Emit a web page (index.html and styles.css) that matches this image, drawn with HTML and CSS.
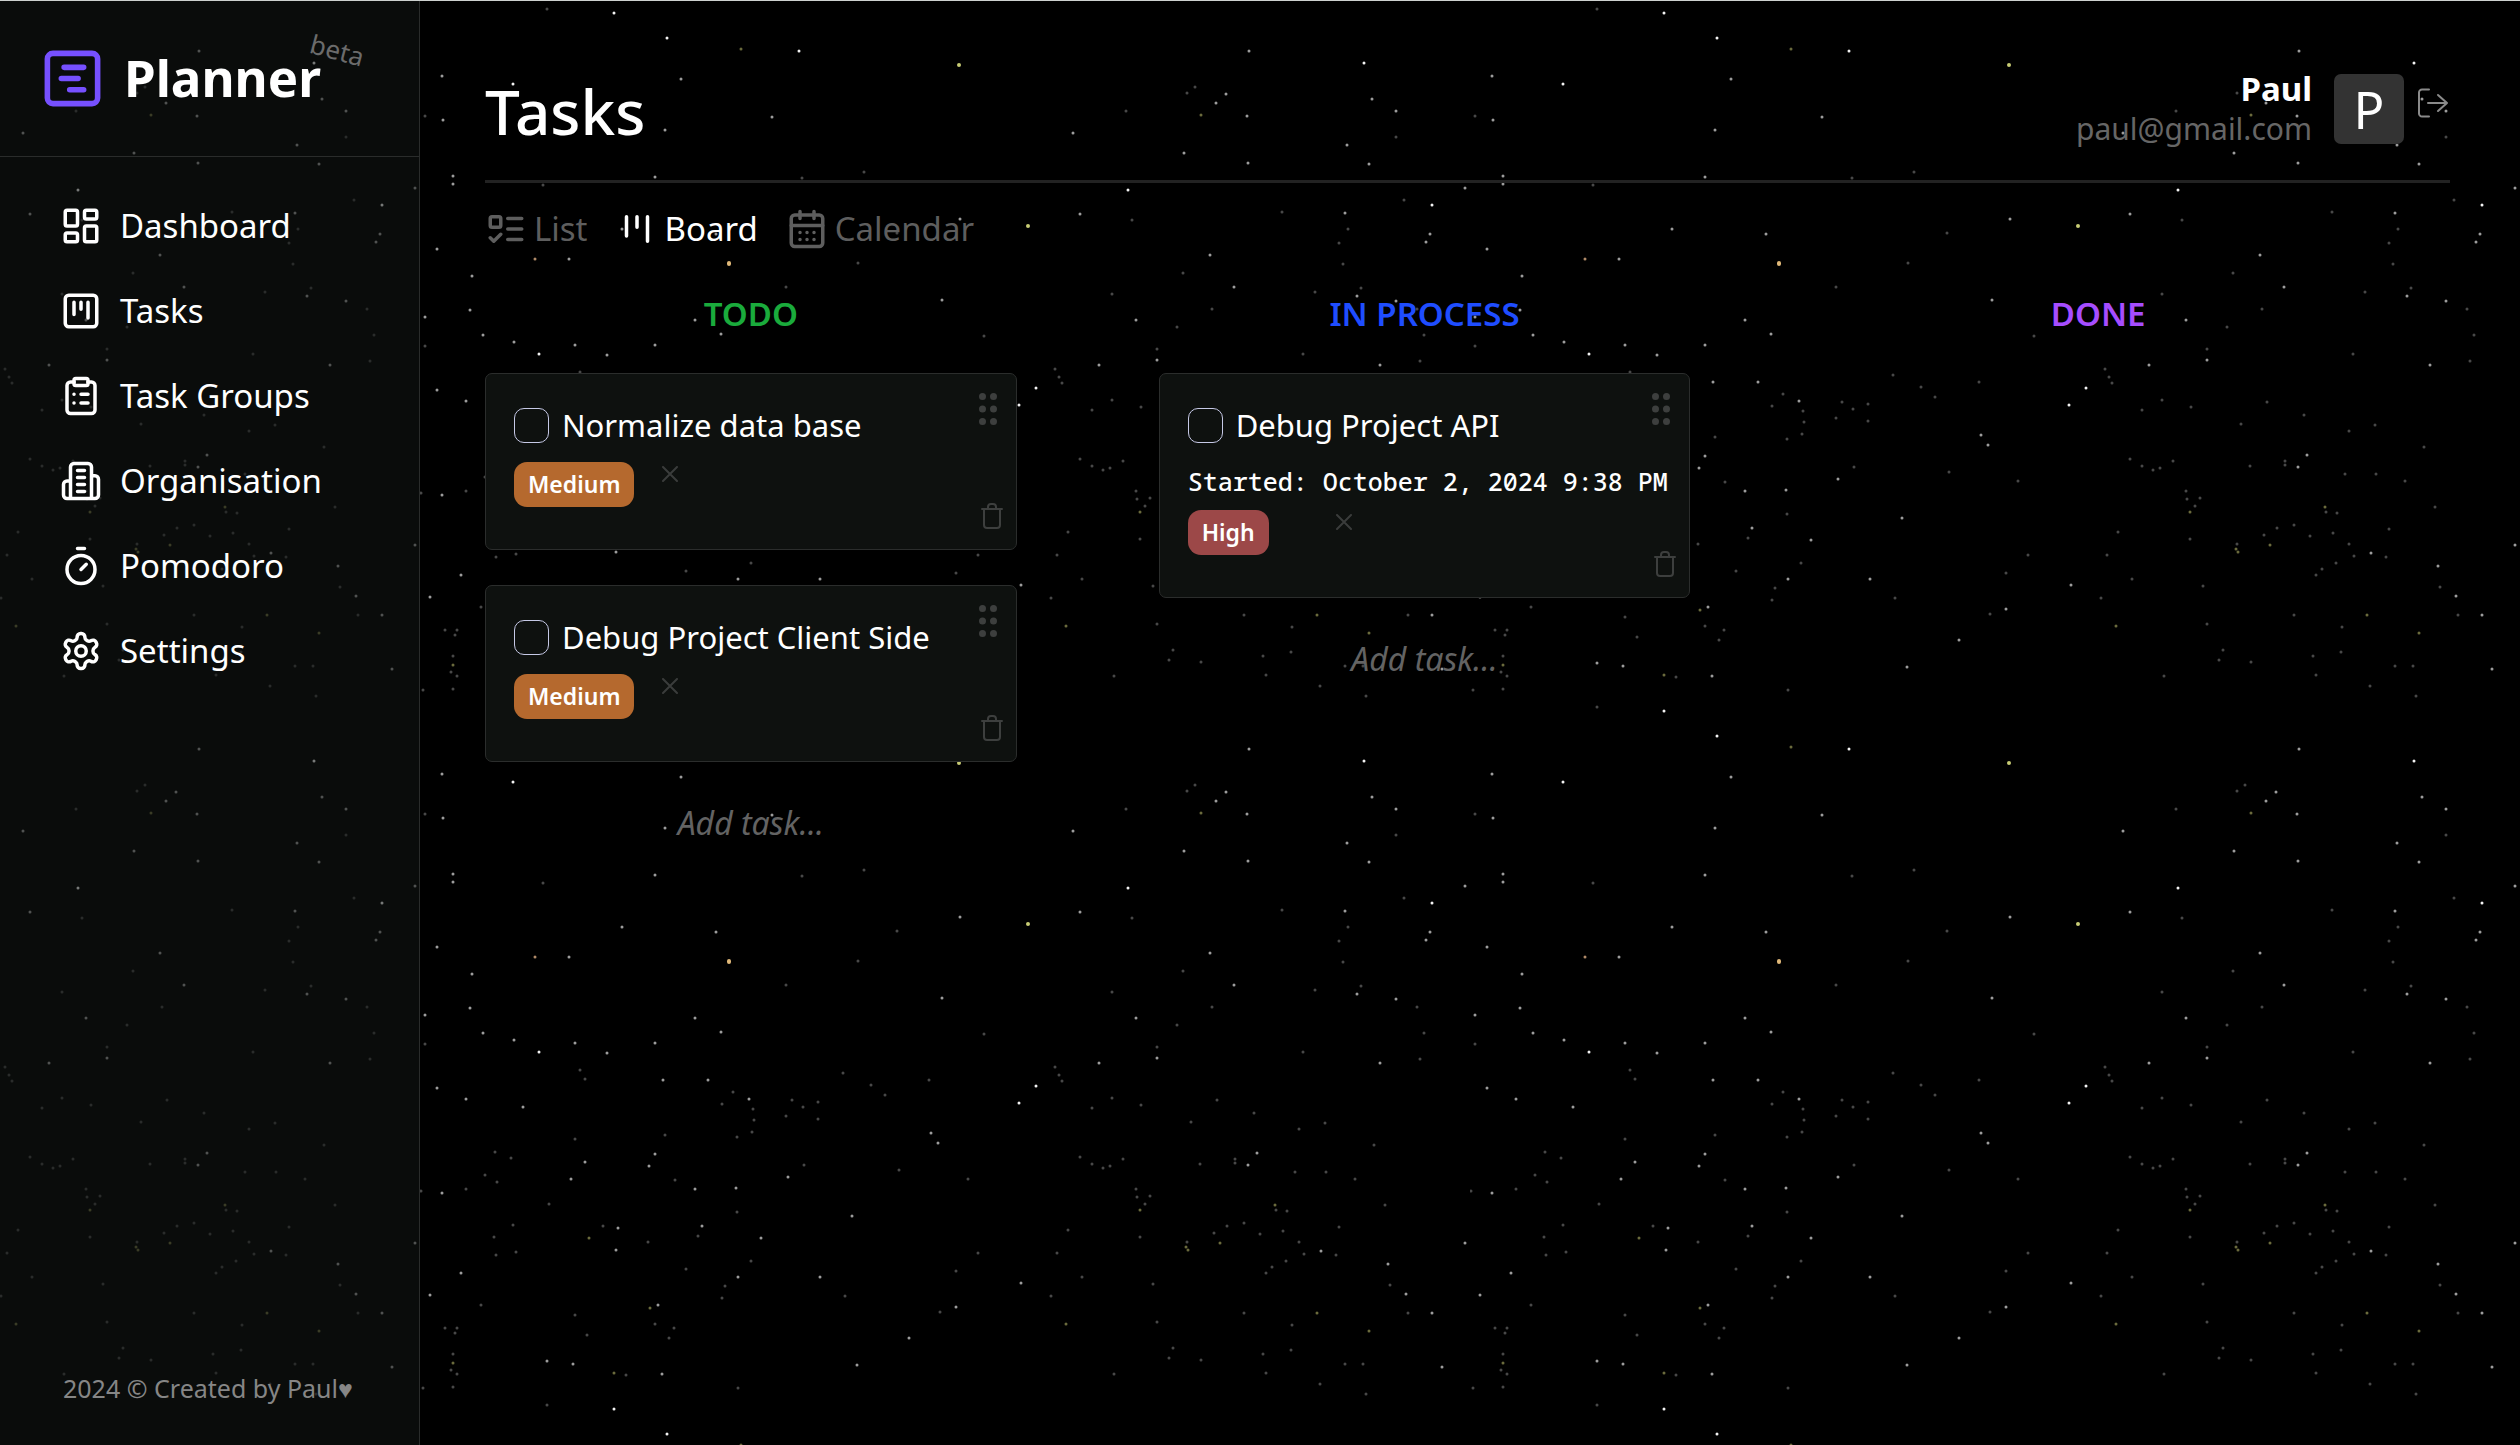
FILE: index.html
```html
<!DOCTYPE html>
<html lang="en">
<head>
<meta charset="utf-8">
<meta name="viewport" content="width=device-width, initial-scale=1">
<title>Tasks - Planner</title>
<link rel="stylesheet" href="styles.css">
</head>
<body>
<svg class="sky" aria-hidden="true">
  <defs>
    <pattern id="stars" x="420" y="0" width="1050" height="698" patternUnits="userSpaceOnUse">
      <path class="star star-bright" d="M194 13h0M247 38h0M379 51h0M93 84h0M944 63h0M708 190h0M1012 205h0M119 354h0M616 388h0M599 405h0"/>
      <path class="star star-mid" d="M22 76h0M261 79h0M829 51h0M23 120h0M245 130h0M352 117h0M806 94h0M796 103h0M827 116h0M952 99h0M976 111h0M653 133h0M764 153h0M828 163h0M927 145h0M949 164h0M33 176h0M33 184h0M235 177h0M1045 188h0M925 213h0M660 214h0M540 219h0M1010 234h0M1006 242h0M202 229h0M296 234h0M17 249h0M149 259h0M790 255h0M52 276h0M814 287h0M937 296h0M976 301h0M522 300h0M50 310h0M5 317h0M275 320h0M716 320h0M63 335h0M301 334h0M94 342h0M155 345h0M235 345h0M187 355h0M737 360h0M960 365h0M243 382h0M288 382h0M679 365h0M17 390h0M46 401h0M329 401h0M103 409h0M511 435h0M518 445h0M235 456h0M165 464h0M229 468h0M837 455h0M828 467h0M151 481h0M368 479h0M22 495h0M275 491h0M316 490h0M432 518h0M198 530h0M282 528h0M341 540h0M1045 545h0M196 552h0M901 553h0M968 566h0M41 575h0M318 579h0M400 579h0M601 585h0M10 597h0M986 596h0M238 607h0M536 609h0M1012 615h0M489 640h0M127 663h0M153 666h0M437 667h0M242 676h0M1022 669h0"/>
      <path class="star star-dim" d="M127 9h0M5 116h0M775 87h0M767 93h0M706 111h0M976 137h0M123 185h0M382 178h0M444 172h0M984 200h0M862 212h0M712 220h0M928 229h0M919 243h0M477 233h0M438 263h0M923 264h0M763 273h0M366 287h0M692 294h0M895 292h0M941 288h0M997 309h0M792 309h0M757 327h0M564 336h0M1004 335h0M5 346h0M737 349h0M883 354h0M1000 361h0M160 372h0M165 381h0M423 375h0M635 369h0M639 377h0M642 383h0M509 382h0M451 387h0M313 394h0M465 397h0M302 406h0M333 411h0M372 402h0M398 404h0M383 409h0M692 400h0M721 407h0M672 410h0M797 402h0M834 415h0M366 418h0M398 421h0M334 422h0M771 424h0M905 425h0M879 431h0M332 434h0M317 439h0M245 437h0M155 441h0M954 447h0M75 454h0M91 460h0M660 459h0M703 461h0M672 466h0M683 470h0M690 468h0M815 461h0M815 465h0M780 466h0M384 467h0M479 472h0M875 474h0M906 474h0M65 477h0M77 484h0M255 482h0M548 481h0M935 481h0M1 493h0M46 491h0M716 491h0M717 499h0M730 498h0M725 506h0M129 506h0M856 512h0M867 513h0M965 507h0M317 514h0M93 527h0M74 539h0M183 528h0M278 538h0M228 544h0M720 539h0M767 544h0M807 528h0M824 525h0M794 535h0M840 536h0M863 533h0M879 544h0M919 529h0M648 532h0M96 554h0M76 557h0M558 555h0M637 555h0M884 556h0M916 557h0M331 563h0M866 563h0M852 569h0M846 575h0M266 571h0M536 573h0M662 579h0M305 588h0M302 600h0M733 586h0M970 587h0M425 598h0M631 598h0M61 607h0M520 614h0M155 617h0M824 615h0M988 615h0M235 626h0M737 624h0M872 627h0M25 630h0M37 630h0M35 635h0M254 630h0M167 637h0M249 640h0M753 650h0M749 660h0M871 652h0M843 656h0M33 656h0M31 672h0M37 676h0M925 666h0M943 666h0M781 662h0M206 677h0M694 676h0M846 675h0M3 690h0M33 689h0M318 690h0M946 696h0M900 686h0"/>
      <path class="star star-moss" d="M321 49h0M781 115h0M720 512h0M855 507h0M169 540h0M766 549h0M768 552h0M800 545h0M230 610h0M646 626h0M897 615h0M949 633h0M33 665h0M194 675h0"/>
      <path class="star star-yellow" d="M539 65h0M608 226h0"/>
      <path class="star star-gold" d="M309 263v1"/>
      <path class="star star-copper" d="M115 259h0"/>
    </pattern>
  </defs>
  <rect width="100%" height="100%" fill="url(#stars)"/>
</svg>

<div class="app">
  <aside class="sidebar">
    <header class="brand">
      <svg class="brand-logo icon" viewBox="0 0 24 24" aria-hidden="true"><rect x="3" y="3" width="18" height="18" rx="2"/><path d="M9 8h7M8 12h6M11 16h5"/></svg>
      <span class="brand-name">Planner<small class="brand-tag">beta</small></span>
    </header>
    <nav class="menu">
      <a class="menu-link" href="#dashboard"><svg class="icon" viewBox="0 0 24 24"><rect x="3" y="3" width="7" height="9" rx="1"/><rect x="14" y="3" width="7" height="5" rx="1"/><rect x="14" y="12" width="7" height="9" rx="1"/><rect x="3" y="16" width="7" height="5" rx="1"/></svg>Dashboard</a>
      <a class="menu-link" href="#tasks"><svg class="icon" viewBox="0 0 24 24"><rect x="3" y="3" width="18" height="18" rx="2"/><path d="M8 7v7M12 7v4M16 7v9"/></svg>Tasks</a>
      <a class="menu-link" href="#groups"><svg class="icon" viewBox="0 0 24 24"><rect x="8" y="2" width="8" height="4" rx="1"/><path d="M16 4h2a2 2 0 0 1 2 2v14a2 2 0 0 1-2 2H6a2 2 0 0 1-2-2V6a2 2 0 0 1 2-2h2M12 11h4M12 16h4M8 11h.01M8 16h.01"/></svg>Task Groups</a>
      <a class="menu-link" href="#organisation"><svg class="icon" viewBox="0 0 24 24"><path d="M6 22V4a2 2 0 0 1 2-2h8a2 2 0 0 1 2 2v18ZM6 12H4a2 2 0 0 0-2 2v6a2 2 0 0 0 2 2h2M18 9h2a2 2 0 0 1 2 2v9a2 2 0 0 1-2 2h-2M10 6h4M10 10h4M10 14h4M10 18h4"/></svg>Organisation</a>
      <a class="menu-link" href="#pomodoro"><svg class="icon" viewBox="0 0 24 24"><path d="M10 2h4M12 14l3-3"/><circle cx="12" cy="14" r="8"/></svg>Pomodoro</a>
      <a class="menu-link" href="#settings"><svg class="icon" viewBox="0 0 24 24"><path d="M12.22 2h-.44a2 2 0 0 0-2 2v.18a2 2 0 0 1-1 1.73l-.43.25a2 2 0 0 1-2 0l-.15-.08a2 2 0 0 0-2.73.73l-.22.38a2 2 0 0 0 .73 2.73l.15.1a2 2 0 0 1 1 1.72v.51a2 2 0 0 1-1 1.74l-.15.09a2 2 0 0 0-.73 2.73l.22.38a2 2 0 0 0 2.73.73l.15-.08a2 2 0 0 1 2 0l.43.25a2 2 0 0 1 1 1.73V20a2 2 0 0 0 2 2h.44a2 2 0 0 0 2-2v-.18a2 2 0 0 1 1-1.73l.43-.25a2 2 0 0 1 2 0l.15.08a2 2 0 0 0 2.73-.73l.22-.39a2 2 0 0 0-.73-2.73l-.15-.08a2 2 0 0 1-1-1.74v-.5a2 2 0 0 1 1-1.74l.15-.09a2 2 0 0 0 .73-2.73l-.22-.38a2 2 0 0 0-2.73-.73l-.15.08a2 2 0 0 1-2 0l-.43-.25a2 2 0 0 1-1-1.73V4a2 2 0 0 0-2-2z"/><circle cx="12" cy="12" r="3"/></svg>Settings</a>
    </nav>
    <footer class="credits">2024 © Created by Paul♥</footer>
  </aside>

  <main class="content">
    <header class="page-head">
      <h1 class="page-title">Tasks</h1>
      <div class="account">
        <div class="account-text">
          <strong class="account-name">Paul</strong>
          <span class="account-mail">paul@gmail.com</span>
        </div>
        <div class="avatar">P</div>
        <button class="logout" type="button" aria-label="Log out"><svg viewBox="0 0 32 32"><path d="M11 2.500H4a3 3 0 0 0-3 3v21a3 3 0 0 0 3 3h7M10 16h19M20 8l9 8-9 8"/></svg></button>
      </div>
    </header>

    <nav class="tabs">
      <button class="tab" type="button"><svg class="icon" viewBox="0 0 24 24"><rect x="3" y="5" width="6" height="6" rx="1"/><path d="m3 17 2 2 4-4M13 6h8M13 12h8M13 18h8"/></svg>List</button>
      <button class="tab tab-active" type="button"><svg class="icon" viewBox="0 0 24 24"><path d="M6 5v11M12 5v6M18 5v14"/></svg>Board</button>
      <button class="tab" type="button"><svg class="icon" viewBox="0 0 24 24"><path d="M8 2v4M16 2v4M3 10h18M8 14h.01M12 14h.01M16 14h.01M8 18h.01M12 18h.01M16 18h.01"/><rect x="3" y="4" width="18" height="18" rx="2"/></svg>Calendar</button>
    </nav>

    <div class="board">
      <section class="column">
        <h2 class="column-title todo">TODO</h2>
        <article class="card">
          <label class="task"><input class="check" type="checkbox"><span>Normalize data base</span></label>
          <div class="meta"><span class="badge medium">Medium</span><button class="clear" type="button" aria-label="Clear priority"><svg viewBox="0 0 16 16"><path d="M1 1l14 14M15 1L1 15"/></svg></button></div>
          <button class="grip" type="button" aria-label="Move task"><svg viewBox="0 0 18 32"><path d="M3.500 3.500h0M14.500 3.500h0M3.500 16h0M14.500 16h0M3.500 28.500h0M14.500 28.500h0"/></svg></button>
          <button class="trash" type="button" aria-label="Delete task"><svg viewBox="0 0 22 26"><path d="M1 6h20M3 6v16a3 3 0 0 0 3 3h10a3 3 0 0 0 3-3V6M7 6V4a3 3 0 0 1 3-3h2a3 3 0 0 1 3 3v2"/></svg></button>
        </article>
        <article class="card">
          <label class="task"><input class="check" type="checkbox"><span>Debug Project Client Side</span></label>
          <div class="meta"><span class="badge medium">Medium</span><button class="clear" type="button" aria-label="Clear priority"><svg viewBox="0 0 16 16"><path d="M1 1l14 14M15 1L1 15"/></svg></button></div>
          <button class="grip" type="button" aria-label="Move task"><svg viewBox="0 0 18 32"><path d="M3.500 3.500h0M14.500 3.500h0M3.500 16h0M14.500 16h0M3.500 28.500h0M14.500 28.500h0"/></svg></button>
          <button class="trash" type="button" aria-label="Delete task"><svg viewBox="0 0 22 26"><path d="M1 6h20M3 6v16a3 3 0 0 0 3 3h10a3 3 0 0 0 3-3V6M7 6V4a3 3 0 0 1 3-3h2a3 3 0 0 1 3 3v2"/></svg></button>
        </article>
        <button class="add" type="button">Add task...</button>
      </section>

      <section class="column">
        <h2 class="column-title process">IN PROCESS</h2>
        <article class="card">
          <label class="task"><input class="check" type="checkbox"><span>Debug Project API</span></label>
          <p class="started">Started: October 2, 2024 9:38 PM</p>
          <div class="meta"><span class="badge high">High</span><button class="clear" type="button" aria-label="Clear priority"><svg viewBox="0 0 16 16"><path d="M1 1l14 14M15 1L1 15"/></svg></button></div>
          <button class="grip" type="button" aria-label="Move task"><svg viewBox="0 0 18 32"><path d="M3.500 3.500h0M14.500 3.500h0M3.500 16h0M14.500 16h0M3.500 28.500h0M14.500 28.500h0"/></svg></button>
          <button class="trash" type="button" aria-label="Delete task"><svg viewBox="0 0 22 26"><path d="M1 6h20M3 6v16a3 3 0 0 0 3 3h10a3 3 0 0 0 3-3V6M7 6V4a3 3 0 0 1 3-3h2a3 3 0 0 1 3 3v2"/></svg></button>
        </article>
        <button class="add" type="button">Add task...</button>
      </section>

      <section class="column">
        <h2 class="column-title done">DONE</h2>
      </section>
    </div>
  </main>
</div>
</body>
</html>
```
FILE: styles.css
```css
* {
  box-sizing: border-box;
}

body {
  margin: 0;
  background: #000;
  color: #fff;
  font-family: "Noto Sans", "Open Sans", sans-serif;
  font-size: 33px;
  line-height: 48px;
}

button {
  padding: 0;
  border: 0;
  background: none;
  color: inherit;
  font: inherit;
  cursor: pointer;
}

svg {
  display: block;
  fill: none;
  stroke: currentColor;
  stroke-width: 2;
  stroke-linecap: round;
  stroke-linejoin: round;
}

/* Starry background */
.sky {
  position: absolute;
  inset: 0;
  width: 100%;
  height: 100%;
  stroke: none;
  z-index: -1;
}

.star {
  stroke-width: 3;
}

.star-bright {
  stroke: #f2f2f2;
}

.star-mid {
  stroke: #9c9c9c;
}

.star-dim {
  stroke: #484848;
}

.star-moss {
  stroke: #6a6a3c;
}

.star-yellow {
  stroke: #c8cc74;
  stroke-width: 4;
}

.star-gold {
  stroke: #e0b878;
  stroke-width: 4;
}

.star-copper {
  stroke: #b08a68;
}

.app {
  display: grid;
  grid-template-columns: 420px minmax(0, 1fr);
  min-height: 100vh;
  border-top: 1px solid #cdd1cf;
}

.icon {
  width: 42px;
  height: 42px;
  flex: none;
}

/* Sidebar */
.sidebar {
  display: flex;
  flex-direction: column;
  background: rgba(18, 22, 20, 0.55);
  border-right: 1px solid #2a2c2b;
}

.brand {
  display: flex;
  align-items: center;
  gap: 18px;
  height: 156px;
  padding-left: 39px;
  border-bottom: 1px solid #2a2c2b;
}

.brand-logo {
  width: 67px;
  height: 67px;
  color: #7650ff;
}

.brand-name {
  position: relative;
  padding-bottom: 3px;
  font-size: 51px;
  font-weight: 700;
  line-height: 70px;
}

.brand-tag {
  position: absolute;
  top: -10px;
  right: -44px;
  color: #6b6b6b;
  font-size: 26px;
  font-weight: 400;
  line-height: 36px;
  transform: rotate(15deg);
}

.menu {
  display: flex;
  flex-direction: column;
  gap: 37px;
  padding: 45px 60px;
}

.menu-link {
  display: flex;
  align-items: center;
  gap: 18px;
  color: #fff;
  text-decoration: none;
}

.credits {
  margin-top: auto;
  padding: 0 20px 39px 63px;
  color: #868686;
  font-size: 25px;
  line-height: 36px;
}

/* Page header */
.content {
  padding: 0 70px 40px 65px;
}

.page-head {
  display: flex;
  align-items: center;
  justify-content: space-between;
  height: 182px;
  padding-top: 36px;
  border-bottom: 3px solid #222;
}

.page-title {
  margin: 0;
  padding-top: 4px;
  font-size: 62px;
  font-weight: 500;
  line-height: 84px;
}

.account {
  display: flex;
  align-items: center;
}

.account-text {
  display: flex;
  flex-direction: column;
  margin-right: 22px;
  line-height: 40px;
  text-align: right;
}

.account-name {
  font-weight: 700;
}

.account-mail {
  color: #666;
  font-size: 30px;
}

.avatar {
  display: grid;
  place-items: center;
  width: 70px;
  height: 70px;
  margin-right: 14px;
  border-radius: 7px;
  background: #333;
  font-size: 51px;
  line-height: 70px;
}

.logout {
  align-self: flex-start;
  margin-top: 18px;
  color: #8a8a8a;
}

.logout svg {
  width: 32px;
  height: 32px;
}

/* View tabs */
.tabs {
  display: flex;
  gap: 28px;
  margin-top: 22px;
}

.tab {
  display: flex;
  align-items: center;
  gap: 7px;
  color: #5e5e5e;
}

.tab-active {
  color: #fff;
}

/* Board */
.board {
  display: grid;
  grid-template-columns: repeat(3, minmax(0, 1fr));
  gap: 56px;
  margin-top: 37px;
}

.column {
  display: flex;
  flex-direction: column;
  gap: 35px;
  padding-right: 86px;
}

.column-title {
  margin: 0;
  font-size: 33px;
  font-weight: 600;
  line-height: 48px;
  text-align: center;
}

.todo {
  color: #1aab3c;
}

.process {
  color: #1f4dff;
}

.done {
  color: #a64dff;
}

.card {
  position: relative;
  padding: 34px 20px 42px 28px;
  border: 1px solid #2b2d2c;
  border-radius: 7px;
  background: #0e110f;
}

.task {
  display: flex;
  align-items: center;
  gap: 13px;
  font-size: 31px;
  line-height: 35px;
}

.check {
  appearance: none;
  width: 35px;
  height: 35px;
  margin: 0;
  border: 1px solid #c6c9e6;
  border-radius: 10px;
  background: #0e110f;
}

.started {
  margin: 21px 0 0;
  font-family: "Noto Sans Mono", "DejaVu Sans Mono", monospace;
  font-size: 25px;
  font-weight: 500;
  line-height: 35px;
  white-space: nowrap;
}

.meta {
  display: grid;
  grid-template-columns: 148px auto;
  justify-content: start;
  margin-top: 19px;
}

.started + .meta {
  margin-top: 11px;
}

.badge {
  justify-self: start;
  padding: 0 14px;
  border-radius: 13px;
  font-size: 23px;
  font-weight: 600;
  line-height: 45px;
}

.medium {
  background: #b5692e;
}

.high {
  background: #9c4848;
}

.clear {
  align-self: start;
  margin-top: 4px;
  color: #3a3c3b;
}

.clear svg {
  width: 16px;
  height: 16px;
}

.grip {
  position: absolute;
  top: 19px;
  right: 19px;
  color: #3d3f3e;
}

.grip svg {
  width: 18px;
  height: 32px;
  stroke-width: 7;
}

.trash {
  position: absolute;
  right: 13px;
  bottom: 20px;
  color: #3d3f3e;
}

.trash svg {
  width: 22px;
  height: 26px;
}

.add {
  align-self: center;
  margin-top: 2px;
  color: #636363;
  font-size: 32px;
  font-style: italic;
}
```
